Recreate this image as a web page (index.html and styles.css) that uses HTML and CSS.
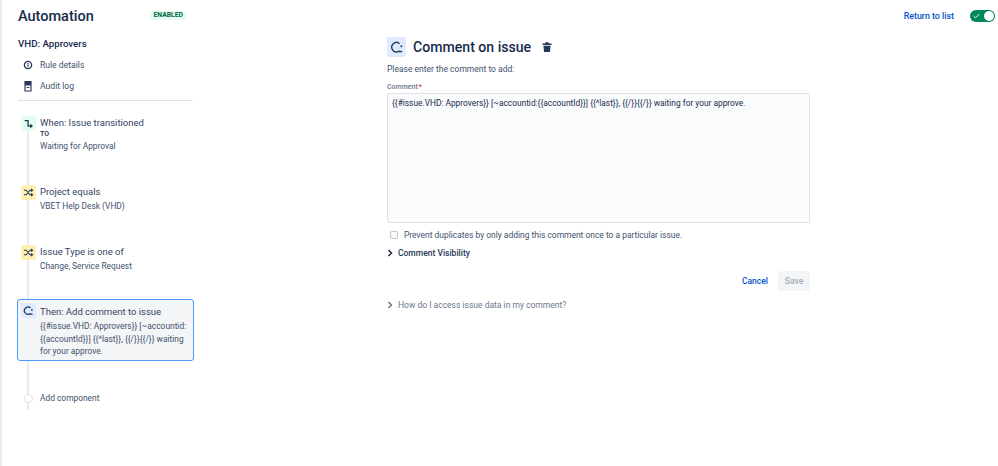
FILE: index.html
```html
<!DOCTYPE html>
<html lang="en">
<head>
<meta charset="utf-8">
<title>Automation</title>
<link rel="stylesheet" href="styles.css">
</head>
<body>
<div class="page">
  <aside class="sidebar">
    <div class="brand">
      <h1>Automation</h1>
      <span class="lozenge">ENABLED</span>
    </div>
    <h2 class="rule-name">VHD: Approvers</h2>
    <nav class="side-nav">
      <a class="nav-item">
        <svg class="nav-icon" viewBox="0 0 12 12"><circle cx="6" cy="6" r="3.6" fill="none" stroke="#2b3a5b" stroke-width="1.3"/><rect x="5.4" y="5.4" width="1.2" height="2.4" fill="#2b3a5b"/><rect x="5.4" y="3.9" width="1.2" height="1" fill="#2b3a5b"/></svg>
        <span>Rule details</span>
      </a>
      <a class="nav-item">
        <svg class="nav-icon" viewBox="0 0 12 12"><path d="M3 1.5h6v9.5H3z" fill="none" stroke="#2b3a5b" stroke-width="1.2"/><rect x="3" y="1.5" width="6" height="4" fill="#2b3a5b"/><rect x="4.6" y="7" width="2.8" height="1" fill="#2b3a5b"/></svg>
        <span>Audit log</span>
      </a>
    </nav>
    <hr class="divider">
    <div class="timeline">
      <span class="rail"></span>
      <div class="step step-when">
        <span class="badge badge-green">
          <svg viewBox="0 0 12 12"><path d="M1.8 2.8h3.7v6h4M8 7.2 9.8 8.8 8 10.4" fill="none" stroke="#1f3a4d" stroke-width="1.4"/></svg>
        </span>
        <div class="step-text">
          <div class="step-title">When: Issue transitioned</div>
          <div class="step-to">TO</div>
          <div class="step-sub">Waiting for Approval</div>
        </div>
      </div>
      <div class="step step-project">
        <span class="badge badge-yellow">
          <svg viewBox="0 0 12 12"><path d="M1 3.5h2.5l4 5H10M1 8.5h2.5l4-5H10M8.8 2l1.7 1.5L8.8 5M8.8 7l1.7 1.5L8.8 10" fill="none" stroke="#253858" stroke-width="1.1"/></svg>
        </span>
        <div class="step-text">
          <div class="step-title">Project equals</div>
          <div class="step-sub">VBET Help Desk (VHD)</div>
        </div>
      </div>
      <div class="step step-type">
        <span class="badge badge-yellow">
          <svg viewBox="0 0 12 12"><path d="M1 3.5h2.5l4 5H10M1 8.5h2.5l4-5H10M8.8 2l1.7 1.5L8.8 5M8.8 7l1.7 1.5L8.8 10" fill="none" stroke="#253858" stroke-width="1.1"/></svg>
        </span>
        <div class="step-text">
          <div class="step-title">Issue Type is one of</div>
          <div class="step-sub">Change, Service Request</div>
        </div>
      </div>
      <div class="step step-then">
        <span class="badge badge-blue">
          <svg viewBox="0 0 12 12"><path d="M8.2 3.2A4 4 0 1 0 7.4 9.7L10.4 10" fill="none" stroke="#253858" stroke-width="1.4"/><circle cx="9.7" cy="5.4" r="1" fill="#253858"/></svg>
        </span>
        <div class="step-text">
          <div class="step-title">Then: Add comment to issue</div>
          <div class="step-sub step-long">{{#issue.VHD: Approvers}} [~accountid:<br>{{accountId}}] {{^last}}, {{/}}{{/}} waiting<br>for your approve.</div>
        </div>
      </div>
      <div class="step step-add">
        <span class="add-dot"></span>
        <div class="step-sub add-label">Add component</div>
      </div>
    </div>
  </aside>

  <main class="editor">
    <header class="editor-head">
      <span class="head-badge">
        <svg viewBox="0 0 12 12"><path d="M8.2 3.2A4 4 0 1 0 7.4 9.7L10.4 10" fill="none" stroke="#253858" stroke-width="1.2"/><circle cx="9.7" cy="5.4" r=".85" fill="#253858"/></svg>
      </span>
      <h2>Comment on issue</h2>
      <svg class="trash" viewBox="0 0 12 12"><path d="M1.5 2.6h9v1.5h-9zM4.3 2.6V1.2h3.4v1.4zM2.4 4.8h7.2l-.7 6.2H3.1z" fill="#253858"/></svg>
    </header>
    <p class="lead">Please enter the comment to add:</p>
    <label class="field-label">Comment<span class="req">*</span></label>
    <div class="textarea">{{#issue.VHD: Approvers}} [~accountid:{{accountId}}] {{^last}}, {{/}}{{/}} waiting for your approve.</div>
    <div class="check-row">
      <span class="checkbox"></span>
      <span>Prevent duplicates by only adding this comment once to a particular issue.</span>
    </div>
    <div class="expander strong">
      <svg class="chev" viewBox="0 0 6 8"><path d="M1.5 1 4.5 4 1.5 7" fill="none" stroke="#172b4d" stroke-width="1.5"/></svg>
      <span>Comment Visibility</span>
    </div>
    <div class="actions">
      <a class="cancel">Cancel</a>
      <span class="save">Save</span>
    </div>
    <div class="expander muted">
      <svg class="chev" viewBox="0 0 6 8"><path d="M1.5 1 4.5 4 1.5 7" fill="none" stroke="#5e6c84" stroke-width="1.3"/></svg>
      <span>How do I access issue data in my comment?</span>
    </div>
  </main>

  <div class="top-actions">
    <a class="return">Return to list</a>
    <span class="toggle">
      <svg viewBox="0 0 10 8"><path d="M1 4.2 3.6 6.6 9 1.2" fill="none" stroke="#fff" stroke-width="1.4"/></svg>
      <span class="knob"></span>
    </span>
  </div>
</div>
</body>
</html>
```

FILE: styles.css
```css
* { box-sizing: border-box; }
html, body { margin: 0; height: 100%; background: #fff; }
body {
  font-family: Roboto, "Noto Sans", sans-serif;
  color: #253858;
  overflow: hidden;
}
.page {
  display: flex;
  align-items: flex-start;
  height: 466px;
  border-left: 2px solid #ebecf0;
  padding-left: 16px;
}
.sidebar { width: 175px; flex: none; padding-top: 7px; }
.brand { display: flex; align-items: center; justify-content: space-between; height: 20px; padding-right: 7px; }
.brand h1 { margin: 0; font-size: 14.5px; font-weight: 500; line-height: 20px; color: #172b4d; }
.lozenge {
  font-size: 6.8px; font-weight: 700; line-height: 9px; padding: 0 3px;
  background: #e3fcef; color: #006644; border-radius: 2px; margin-top: -3px;
}
.rule-name { margin: 10px 0 0; font-size: 9.7px; font-weight: 500; line-height: 14px; color: #172b4d; }
.side-nav { display: flex; flex-direction: column; gap: 7px; margin-top: 7px; }
.nav-item { display: flex; align-items: center; height: 14px; font-size: 8.6px; color: #42526e; }
.nav-icon { width: 12px; height: 12px; margin-left: 4px; margin-right: 6px; flex: none; }
.divider { margin: 7px 0 0; border: 0; border-top: 1px solid #dfe1e6; }
.timeline { position: relative; }
.rail { position: absolute; left: 9px; top: 14px; width: 2px; height: 280px; background: #ebecf0; }
.step { position: relative; display: flex; align-items: flex-start; }
.step-when { margin-top: 15px; padding-left: 3px; }
.step-project { margin-top: 32px; padding-left: 3px; }
.step-type { margin-top: 32px; padding-left: 3px; }
.step-then {
  margin-top: 26px;
  width: 177px; margin-left: -1px; height: 62px;
  padding: 3px 0 0 3px;
  background: #f4f5f7;
  border: 1px solid #4c9aff;
  border-radius: 3px;
}
.step-add { margin-top: 31px; padding-left: 6px; align-items: center; }
.badge {
  width: 15px; height: 15px; flex: none; border-radius: 2px;
  display: flex; align-items: center; justify-content: center;
}
.badge svg { width: 11px; height: 11px; }
.badge-green { background: #e3fcef; }
.badge-yellow { background: #fff0b3; }
.badge-blue { background: #deebff; }
.step-text { margin-left: 4px; min-width: 0; }
.step-then .step-text { margin-top: 2px; }
.step-title { font-size: 9.5px; line-height: 14px; color: #344563; white-space: nowrap; }
.step-to { font-size: 7px; font-weight: 500; line-height: 9px; color: #172b4d; }
.step-sub { font-size: 8.4px; line-height: 13px; color: #42526e; margin-top: 1px; white-space: nowrap; }
.step-long { line-height: 12.6px; }
.add-dot { width: 9px; height: 9px; border-radius: 50%; background: #fff; border: 1px solid #dfe1e6; flex: none; }
.add-label { margin: 0 0 0 7px; }

.editor { width: 423px; flex: none; margin-left: 194px; padding-top: 37px; }
.editor-head { display: flex; align-items: center; height: 20px; }
.head-badge {
  width: 19px; height: 20px; background: #deebff; border-radius: 2px;
  display: flex; align-items: center; justify-content: center;
}
.head-badge svg { width: 14px; height: 14px; }
.editor-head h2 { margin: 0 0 0 7px; font-size: 14.1px; font-weight: 500; line-height: 20px; color: #172b4d; }
.trash { width: 12px; height: 12px; margin-left: 10px; }
.lead { margin: 6px 0 0; font-size: 8.5px; line-height: 12px; color: #42526e; }
.field-label { display: block; margin-top: 7px; font-size: 7px; font-weight: 500; line-height: 10px; color: #6b778c; }
.req { color: #de350b; margin-left: 1px; }
.textarea {
  margin-top: 1px; height: 130px; padding: 3px 4px;
  border: 1px solid #dfe1e6; border-radius: 2px; background: #fafbfc;
  font-size: 8.36px; line-height: 13px; color: #172b4d;
}
.check-row { display: flex; align-items: center; margin-top: 6px; padding-left: 3px; font-size: 8.45px; line-height: 12px; color: #42526e; }
.checkbox { width: 8px; height: 8px; margin-right: 6px; border: 1px solid #c1c7d0; border-radius: 2px; background: #fafbfc; }
.expander { display: flex; align-items: center; font-size: 8.5px; line-height: 12px; }
.chev { width: 6px; height: 8px; margin-right: 5px; flex: none; }
.strong { margin-top: 6px; font-weight: 500; color: #253858; }
.muted { margin-top: 8px; color: #6b778c; }
.actions { display: flex; align-items: center; justify-content: flex-end; margin-top: 12px; height: 20px; }
.cancel { font-size: 8.5px; font-weight: 500; color: #0052cc; margin-right: 10px; }
.save {
  width: 32px; height: 20px; background: #f4f5f7; border-radius: 3px;
  display: flex; align-items: center; justify-content: center;
  font-size: 8.5px; font-weight: 500; color: #a5adba;
}
.top-actions { flex: 1; display: flex; align-items: center; justify-content: flex-end; padding: 7px 3px 0 0; height: 24px; }
.return { font-size: 8.8px; font-weight: 500; color: #0052cc; margin-right: 16px; }
.toggle {
  position: relative; width: 25px; height: 12px; border-radius: 6px; background: #00875a;
  display: flex; align-items: center; padding-left: 3px;
}
.toggle svg { width: 7px; height: 6px; }
.knob { position: absolute; right: 1px; top: 1px; width: 10px; height: 10px; border-radius: 50%; background: #fff; }
```
